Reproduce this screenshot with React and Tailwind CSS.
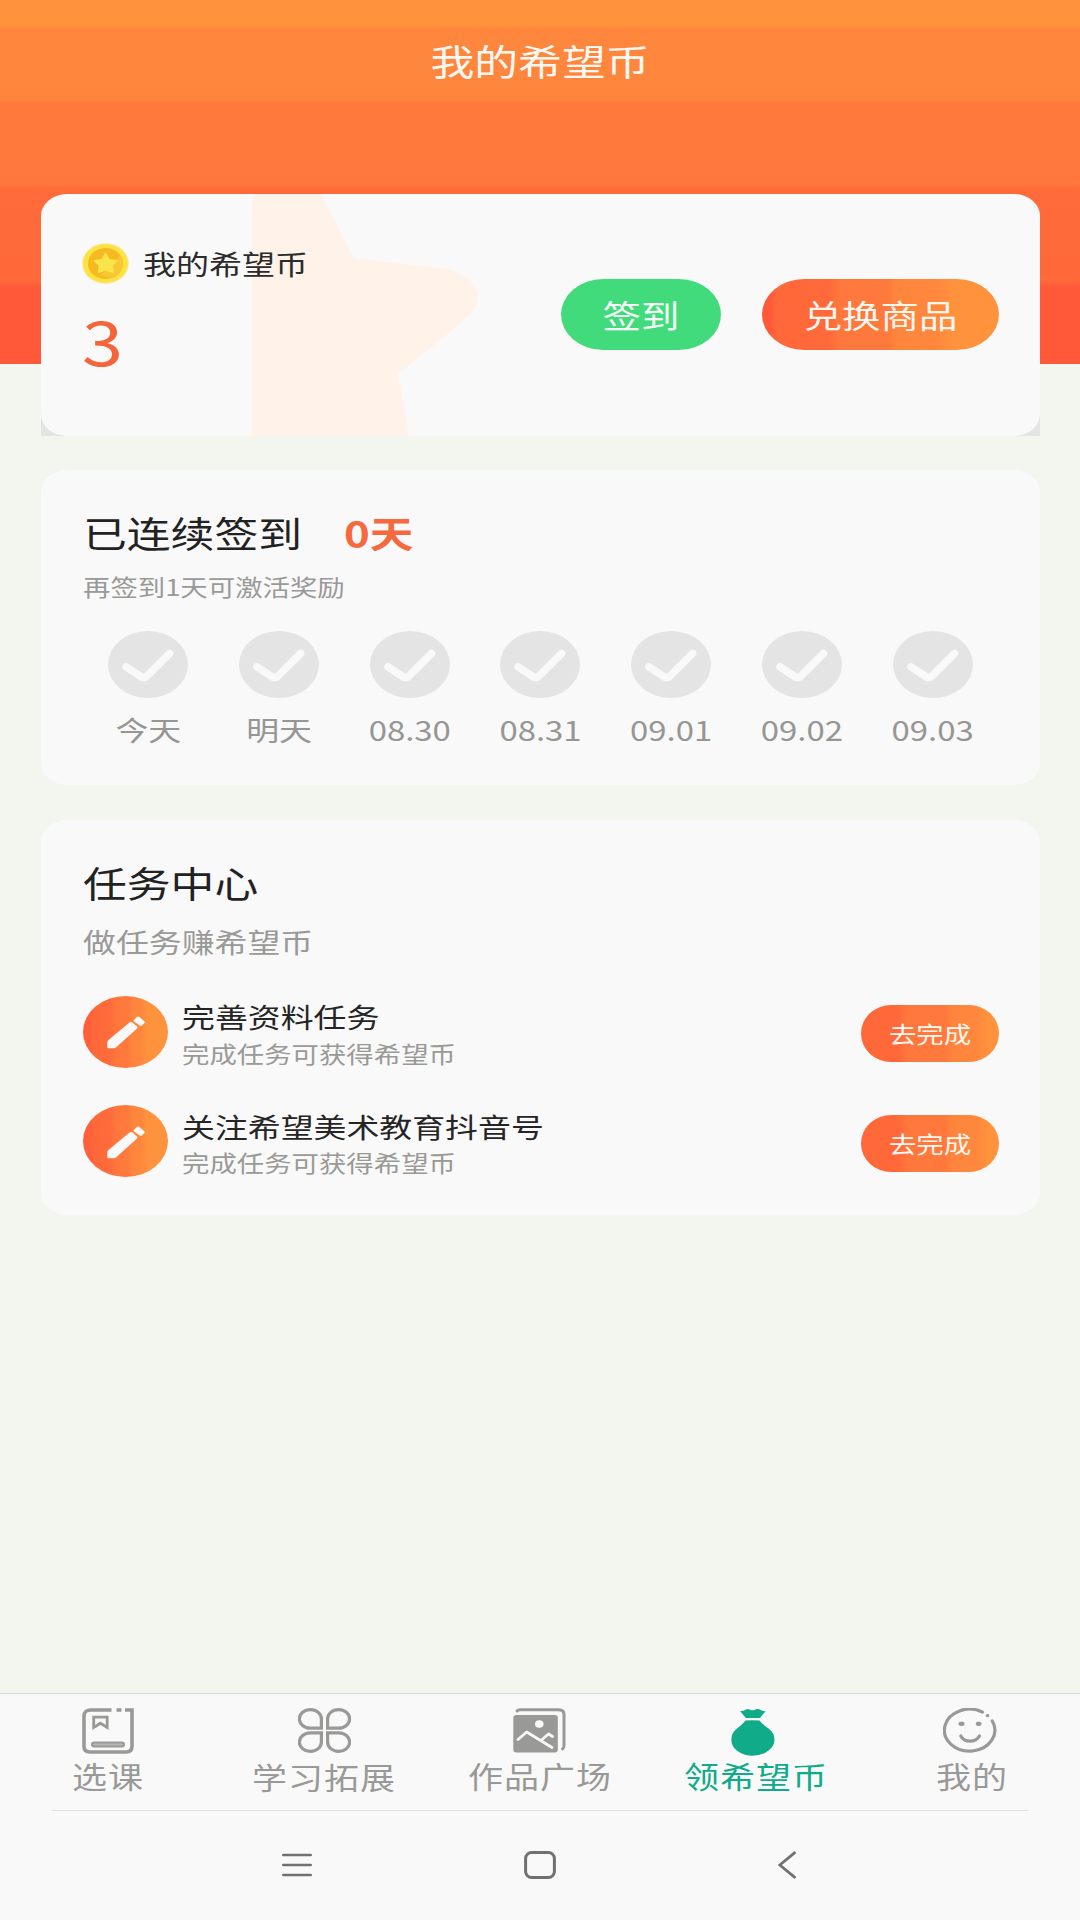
import clsx from 'clsx';

const days = ['今天', '明天', '08.30', '08.31', '09.01', '09.02', '09.03'];

const tasks = [
  { title: '完善资料任务', desc: '完成任务可获得希望币' },
  { title: '关注希望美术教育抖音号', desc: '完成任务可获得希望币' },
];

const CourseIcon = () => (
  <svg className="h-[46px] w-[52px]" viewBox="0 0 52 46" fill="none" stroke="currentColor" strokeWidth="3.6">
    <path d="M29.5 2H9Q2 2 2 8V38.500Q2 44 8 44H44Q50 44 50 38.500V2H43M34.500 2H39.500" />
    <path d="M11.700 9.200H25.200V19.500L18.500 15.200L11.700 19.500Z" strokeWidth="2.800" />
    <rect x="10" y="34.500" width="32" height="4" rx="2" strokeWidth="2" fill="#b5b5b3" />
  </svg>
);

const CloverIcon = () => (
  <svg className="h-[45px] w-[53px]" viewBox="0 0 53 45" fill="none" stroke="currentColor" strokeWidth="3.2">
    <path d="M23.400 20.200V11A11 9.300 0 1 0 12.400 20.200Z" />
    <path d="M29.600 20.200V11A11 9.300 0 1 1 40.600 20.200Z" />
    <path d="M23.400 24.800V34A11 9.300 0 1 1 12.400 24.800Z" />
    <path d="M29.600 24.800V34A11 9.300 0 1 0 40.600 24.800Z" />
  </svg>
);

const GalleryIcon = () => (
  <svg className="mr-[2px] h-[45px] w-[53px]" viewBox="0 0 53 45" fill="none" strokeLinecap="round" strokeLinejoin="round">
    <path d="M4 3Q5 1.700 7 1.700H45.500Q51 1.700 51 6.500V37.500Q51 40 49.500 41" stroke="currentColor" strokeWidth="3" />
    <rect x="0.300" y="7" width="44.500" height="37.500" rx="3" fill="currentColor" />
    <ellipse cx="26.300" cy="16" rx="4.300" ry="3.800" fill="#f9f9f9" />
    <path d="M5 31.500L13.700 24L39 39.500M28.500 32L35.500 26L39.500 28.500" stroke="#f9f9f9" strokeWidth="2.800" />
  </svg>
);

const BagIcon = () => (
  <svg className="mr-[6px] h-[48px] w-[44px]" viewBox="0 0 44 48" fill="currentColor">
    <path d="M9 3Q12 3.500 14.500 1.800Q17 0.300 19 1.700Q22 3.200 25 1.300Q27.500 0.500 29.500 2Q32 3.500 34.700 3L29 10H14.800Z" />
    <path d="M14.500 12.500Q21.500 12 28.500 12.500Q32 17 37.500 20.500Q43.500 25 43.500 31.500Q43.500 38 37.500 42.500Q31 47.700 21.800 47.700Q12.500 47.700 6.500 43Q0.300 38.500 0.300 31.500Q0.300 25 6 20.500Q11 17 14.500 12.500Z" />
  </svg>
);

const SmileIcon = () => (
  <svg className="mr-[4px] h-[45px] w-[54px]" viewBox="0 0 54 45" fill="none" stroke="currentColor" strokeWidth="3.200" strokeLinecap="round">
    <path d="M39.500 4.100A25.200 21 0 1 0 49.300 13" />
    <path d="M19.500 15.800H17.500M36.500 15.800H34.800" strokeWidth="4.200" />
    <path d="M44.300 7.600H44.800" strokeWidth="3.200" />
    <path d="M17.800 28Q20.500 33.200 27 33.200T36.400 28" />
  </svg>
);

const tabs = [
  { label: '选课', icon: CourseIcon },
  { label: '学习拓展', icon: CloverIcon, labelClass: 'mt-[1px]' },
  { label: '作品广场', icon: GalleryIcon },
  { label: '领希望币', icon: BagIcon, active: true },
  { label: '我的', icon: SmileIcon },
];

const Text = ({ className, children }) => (
  <span className={clsx('block scale-y-[0.84] whitespace-nowrap leading-none', className)}>{children}</span>
);

const CoinIcon = () => (
  <svg className="h-[41px] w-[47px]" viewBox="0 0 47 41">
    <ellipse cx="23.500" cy="20.500" rx="23.300" ry="20.300" fill="#ffe3a0" />
    <ellipse cx="23.500" cy="20.500" rx="22.300" ry="19.300" fill="#fbe340" />
    <ellipse cx="23.500" cy="20.500" rx="17.500" ry="15.500" fill="#f5b921" />
    <path d="M38 12Q42 17 40.500 24Q38 32 29 35.200L18 32L33 19Z" fill="#f8c733" />
    <path
      d="M23.500 10.500L27.200 16.800L35 17.700L30 22.500L31.300 29.500L23.500 26.500L16.500 29.500L17.500 22.500L12.500 17.700L20 16.800Z"
      fill="#fbe34a"
      stroke="#fbe34a"
      strokeWidth="1.500"
      strokeLinejoin="round"
    />
  </svg>
);

const DayCheck = () => (
  <svg className="h-[67px] w-[80px]" viewBox="0 0 80 67" fill="none">
    <ellipse cx="40" cy="33.500" rx="40" ry="33.500" fill="#e4e4e4" />
    <path d="M18 35.800L33.500 46Q36 47.600 38.300 45.600L61.500 22.500" stroke="#f9f9f9" strokeWidth="7.600" strokeLinecap="round" />
  </svg>
);

const PencilBadge = () => (
  <div className="flex h-[72px] w-[85px] items-center justify-center rounded-[50%] bg-[linear-gradient(90deg,#ff5f39_6px,#ff693a_12px,#ff6b3a_27px,#ff773c_33px,#ff793c_44px,#ff853d_50px,#ff873d_58px,#ff923d_64px)] pt-[2px]">
    <svg className="h-[33px] w-[38px]" viewBox="0 0 38 33" fill="#f9f9f9">
      <path d="M0.300 26Q0.300 25 1.500 24L22.500 6.500Q24 5.500 25.500 6.500L30 10.500Q31 11.500 29.800 12.700L9.500 31Q8 32.300 6.500 32.300H1.500Q0.200 32.300 0.300 31Z" />
      <path d="M27 4L29.500 1.200Q31 0 32.500 1L37 5Q38.500 6.200 37.200 7.300L34.800 9.600Q33.800 10.500 32.600 9.600L27.500 5.800Q26 5 27 4Z" />
    </svg>
  </div>
);

const Header = () => (
  <header className="flex h-[364px] items-start justify-center bg-[linear-gradient(#ff933d_0px,#ff913d_25px,#ff873d_29px,#ff853d_98px,#ff793c_103px,#ff773c_183px,#ff6b3b_190px,#ff693a_281px,#ff5939_287px,#ff5939_100%)] pt-[39px]">
    <Text className="text-[43.800px] text-[#fff8f2]">我的希望币</Text>
  </header>
);

const BalanceCard = () => (
  <section className="bg-[linear-gradient(transparent_80%,#e4e4e4_80%)]">
    <div className="relative flex h-[242px] justify-between overflow-hidden rounded-[26px/22px] bg-[#f9f9f9] pr-[41px] pl-[41px]">
      <svg className="absolute top-0 left-[210px] h-[242px] w-[228px]" viewBox="0 0 228 242" fill="#fff2e9">
        <path d="M4 0H70L103 64L190 74Q219 78 227 99Q229 112 216 123L188 147L147 180L158 242H1V14Q1 5 4 0Z" />
      </svg>
      <div className="relative pt-[49px]">
        <div className="flex items-center gap-[14px]">
          <CoinIcon />
          <Text className="text-[33px] text-[#2b2b2b]">我的希望币</Text>
        </div>
        <Text className="mt-[18px] text-[74px] text-[#f6643a]">3</Text>
      </div>
      <div className="relative flex gap-[41px] pt-[85px]">
        <button className="flex h-[71px] w-[160px] items-center justify-center rounded-[42px/35.500px] bg-[#42db7b]">
          <Text className="text-[38.400px] text-[#f7fff9]">签到</Text>
        </button>
        <button className="flex h-[71px] w-[237px] items-center justify-center rounded-[42px/35.500px] bg-[linear-gradient(90deg,#ff5939_8px,#ff683a_14px,#ff6a3a_68px,#ff773c_76px,#ff793c_126px,#ff853d_134px,#ff883d_176px,#ff923d_190px)]">
          <Text className="text-[38.400px] text-[#fff6ef]">兑换商品</Text>
        </button>
      </div>
    </div>
  </section>
);

const SignInCard = () => (
  <section className="mt-[34px] h-[315px] rounded-[26px/22px] bg-[#f9f9f9] px-[42px] pt-[41px]">
    <div className="flex gap-[42px]">
      <Text className="text-[43.800px] text-[#222222]">已连续签到</Text>
      <Text className="text-[43.800px] font-bold text-[#f6683e]">0天</Text>
    </div>
    <Text className="mt-[18px] text-[27.400px] text-[#999997]">再签到1天可激活奖励</Text>
    <div className="mt-[31px] grid grid-cols-7">
      {days.map((day) => (
        <div key={day} className="flex flex-col items-center gap-[15px]">
          <DayCheck />
          <Text className="text-[32.900px] text-[#969694]">{day}</Text>
        </div>
      ))}
    </div>
  </section>
);

const TaskCard = () => (
  <section className="mt-[35px] h-[395px] rounded-[26px/22px] bg-[#f9f9f9] px-[42px] pt-[41px]">
    <Text className="text-[43.800px] text-[#222222]">任务中心</Text>
    <Text className="mt-[20px] text-[32.900px] text-[#999997]">做任务赚希望币</Text>
    <div className="mt-[38px] flex flex-col gap-[37.500px]">
      {tasks.map((task) => (
        <div key={task.title} className="flex h-[72px] items-center">
          <PencilBadge />
          <div className="mt-[4px] ml-[14px] flex-1">
            <Text className="text-[32.900px] text-[#252525]">{task.title}</Text>
            <Text className="mt-[7px] text-[27.400px] text-[#999997]">{task.desc}</Text>
          </div>
          <button className="mt-[4px] -mr-[1px] flex h-[57px] w-[138px] items-center justify-center rounded-[30px/28.500px] bg-[linear-gradient(90deg,#ff693a_38px,#ff773c_46px,#ff793c_84px,#ff853d_92px,#ff873d_116px,#ff923d_126px)]">
            <Text className="text-[27.400px] text-[#fff6ef]">去完成</Text>
          </button>
        </div>
      ))}
    </div>
  </section>
);

const TabBar = () => (
  <nav className="border-t border-[#d6d6d4] bg-[#f9f9f9]">
    <div className="grid h-[116px] grid-cols-5 pt-[14px]">
      {tabs.map(({ label, icon: Icon, active, labelClass }) => (
        <div
          key={label}
          className={clsx('flex flex-col items-center', active ? 'text-[#10ab88]' : 'text-[#999997]')}
        >
          <div className="flex h-[49px] items-start">
            <Icon />
          </div>
          <Text className={clsx('text-[35px] tracking-[1px]', labelClass)}>{label}</Text>
        </div>
      ))}
    </div>
    <div className="mx-[52px] h-px bg-[#e2e2e2]" />
    <div className="flex h-[109px] items-center pb-[1px] pl-[282px] text-[#717171]">
      <svg className="h-[24px] w-[30px]" viewBox="0 0 30 24" stroke="currentColor" strokeWidth="2.600" strokeLinecap="round">
        <path d="M1.300 2H28.700M1.300 12H28.700M1.300 22H28.700" />
      </svg>
      <svg className="ml-[212px] h-[28px] w-[32px]" viewBox="0 0 32 28" fill="none" stroke="currentColor" strokeWidth="3">
        <rect x="1.600" y="1.500" width="28.800" height="25" rx="6" />
      </svg>
      <svg className="ml-[222px] h-[28px] w-[18px]" viewBox="0 0 18 28" fill="none" stroke="currentColor" strokeWidth="2.800" strokeLinecap="round">
        <path d="M16.500 1.800L1.800 14L16.500 26.200" />
      </svg>
    </div>
  </nav>
);

const App = () => {
  return (
    <div className="flex h-[1920px] w-[1080px] flex-col overflow-hidden bg-[#f3f5ef] font-['Noto_Sans_CJK_SC',sans-serif]">
      <Header />
      <main className="-mt-[170px] flex flex-1 flex-col pr-[40px] pl-[41px]">
        <BalanceCard />
        <SignInCard />
        <TaskCard />
      </main>
      <TabBar />
    </div>
  );
};

export default App;
